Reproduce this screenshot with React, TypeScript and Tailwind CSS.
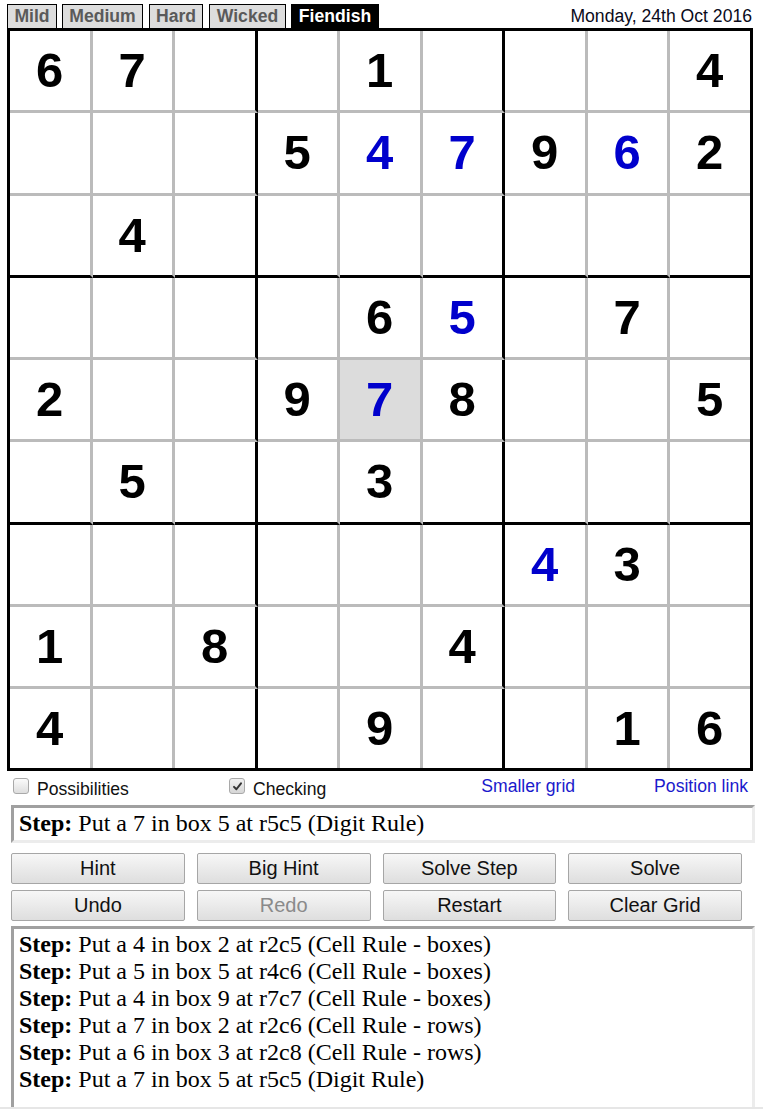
import React from "react";

type Cell = { v: string; blue?: boolean; hl?: boolean };

const raw: (string | null)[][] = [
  ["6", "7", null, null, "1", null, null, null, "4"],
  [null, null, null, "5", "b4", "b7", "9", "b6", "2"],
  [null, "4", null, null, null, null, null, null, null],
  [null, null, null, null, "6", "b5", null, "7", null],
  ["2", null, null, "9", "h7", "8", null, null, "5"],
  [null, "5", null, null, "3", null, null, null, null],
  [null, null, null, null, null, null, "b4", "3", null],
  ["1", null, "8", null, null, "4", null, null, null],
  ["4", null, null, null, "9", null, null, "1", "6"],
];

function parse(s: string | null): Cell {
  if (!s) return { v: "" };
  if (s[0] === "b") return { v: s.slice(1), blue: true };
  if (s[0] === "h") return { v: s.slice(1), blue: true, hl: true };
  return { v: s };
}

const tabs = [
  { t: "Mild", w: "w-[50px]", ml: "ml-0", active: false },
  { t: "Medium", w: "w-[81px]", ml: "ml-[5px]", active: false },
  { t: "Hard", w: "w-[54px]", ml: "ml-[6px]", active: false },
  { t: "Wicked", w: "w-[77px]", ml: "ml-[6px]", active: false },
  { t: "Fiendish", w: "w-[88px]", ml: "ml-[5px]", active: true },
];

const steps = [
  "Put a 4 in box 2 at r2c5 (Cell Rule - boxes)",
  "Put a 5 in box 5 at r4c6 (Cell Rule - boxes)",
  "Put a 4 in box 9 at r7c7 (Cell Rule - boxes)",
  "Put a 7 in box 2 at r2c6 (Cell Rule - rows)",
  "Put a 6 in box 3 at r2c8 (Cell Rule - rows)",
  "Put a 7 in box 5 at r5c5 (Digit Rule)",
];

const buttons = [
  { t: "Hint" },
  { t: "Big Hint" },
  { t: "Solve Step" },
  { t: "Solve" },
  { t: "Undo" },
  { t: "Redo", disabled: true },
  { t: "Restart" },
  { t: "Clear Grid" },
];

function CheckBox({ checked }: { checked?: boolean }) {
  return (
    <div
      className={`w-[16px] h-[16px] rounded-[3px] border border-[#a9a9a9] flex items-center justify-center shrink-0 ${
        checked ? "bg-gradient-to-b from-[#f0f0f0] to-[#d6d6d6]" : "bg-gradient-to-b from-[#fbfbfb] to-[#dedede]"
      }`}
    >
      {checked && (
        <svg width="11" height="11" viewBox="0 0 12 12">
          <path d="M2.2 6.4 L4.8 9 L9.8 2.6" fill="none" stroke="#333" strokeWidth="2.2" strokeLinecap="round" strokeLinejoin="round" />
        </svg>
      )}
    </div>
  );
}

export default function App() {
  return (
    <div className="w-[763px] h-[1110px] bg-white overflow-hidden font-['Liberation_Sans',Arial,sans-serif] text-black">
      {/* top tabs */}
      <div className="flex items-end pt-[4px] pl-[7px] pr-[11px] h-[28px]">
        {tabs.map((t) => (
          <div
            key={t.t}
            className={`${t.w} ${t.ml} h-[24px] border border-b-0 border-black text-center font-bold text-[17.6px] leading-[23px] ${
              t.active ? "bg-black text-white" : "bg-[#dddddd] text-[#5a5a5a]"
            }`}
          >
            {t.t}
          </div>
        ))}
        <div className="ml-auto text-[17.6px] leading-[23px] text-[#0a0a1a]">Monday, 24th Oct 2016</div>
      </div>

      {/* grid */}
      <div className="ml-[7px] w-[745.5px] h-[743.25px] border-[3px] border-black grid grid-cols-[repeat(8,82.5px)_79.5px] grid-rows-[repeat(8,82.25px)_79.25px]">
        {raw.map((row, r) =>
          row.map((s, c) => {
            const cell = parse(s);
            const rb =
              c === 8 ? "border-r-0" : c === 2 || c === 5 ? "border-r-[3px] border-r-black" : "border-r-[3px] border-r-[#bbbbbb]";
            const bb =
              r === 8 ? "border-b-0" : r === 2 || r === 5 ? "border-b-[3px] border-b-black" : "border-b-[3px] border-b-[#bbbbbb]";
            return (
              <div
                key={`${r}-${c}`}
                className={`${rb} ${bb} flex items-center justify-center font-bold text-[49px] leading-none ${
                  cell.hl ? "bg-[#dcdcdc]" : "bg-white"
                } ${cell.blue ? "text-[#0000cc]" : "text-black"}`}
              >
                {cell.v}
              </div>
            );
          })
        )}
      </div>

      {/* options row */}
      <div className="flex items-start h-[34px] pl-[13px] pr-[15px]">
        <div className="w-[216px] flex items-start">
          <div className="mt-[7px]">
            <CheckBox />
          </div>
          <span className="ml-[8px] mt-[8px] text-[17.6px] leading-[20px] text-[#111]">Possibilities</span>
        </div>
        <div className="flex items-start">
          <div className="mt-[7px]">
            <CheckBox checked />
          </div>
          <span className="ml-[8px] mt-[8px] text-[17.6px] leading-[20px] text-[#111]">Checking</span>
        </div>
        <span className="ml-auto mt-[5px] text-[17.6px] leading-[20px] text-[#1a1acc]">Smaller grid</span>
        <span className="ml-[79px] mt-[5px] text-[17.6px] leading-[20px] text-[#1a1acc]">Position link</span>
      </div>

      {/* step box */}
      <div className="ml-[11px] w-[744px] h-[38px] border-[3px] border-t-[#a0a0a0] border-l-[#a0a0a0] border-b-[#ececec] border-r-[#ececec] pl-[5px] pt-[2px] font-['Liberation_Serif','Times_New_Roman',serif] text-[24px] leading-[27px] whitespace-nowrap">
        <b>Step:</b> Put a 7 in box 5 at r5c5 (Digit Rule)
      </div>

      {/* buttons */}
      <div className="ml-[11px] mt-[10px] w-[731px] grid grid-cols-4 gap-x-[12px] gap-y-[6px]">
        {buttons.map((b) => (
          <div
            key={b.t}
            className={`h-[31px] border border-[#a6a6a6] rounded-[2px] bg-gradient-to-b from-[#f7f7f7] to-[#dedede] flex items-center justify-center text-[20px] leading-[23px] ${
              b.disabled ? "text-[#8a8a8a]" : "text-[#111]"
            }`}
          >
            {b.t}
          </div>
        ))}
      </div>

      {/* log box */}
      <div className="ml-[11px] mt-[5px] w-[744px] h-[181px] border-t-[3px] border-l-[3px] border-r-[3px] border-t-[#a0a0a0] border-l-[#a0a0a0] border-r-[#ececec] pl-[5px] pt-[2px] font-['Liberation_Serif','Times_New_Roman',serif] text-[24px] leading-[27px]">
        {steps.map((s, i) => (
          <div key={i} className="whitespace-nowrap">
            <b>Step:</b> {s}
          </div>
        ))}
      </div>
      <div className="h-[2px] w-full bg-[#e6e6e6]" />
    </div>
  );
}
